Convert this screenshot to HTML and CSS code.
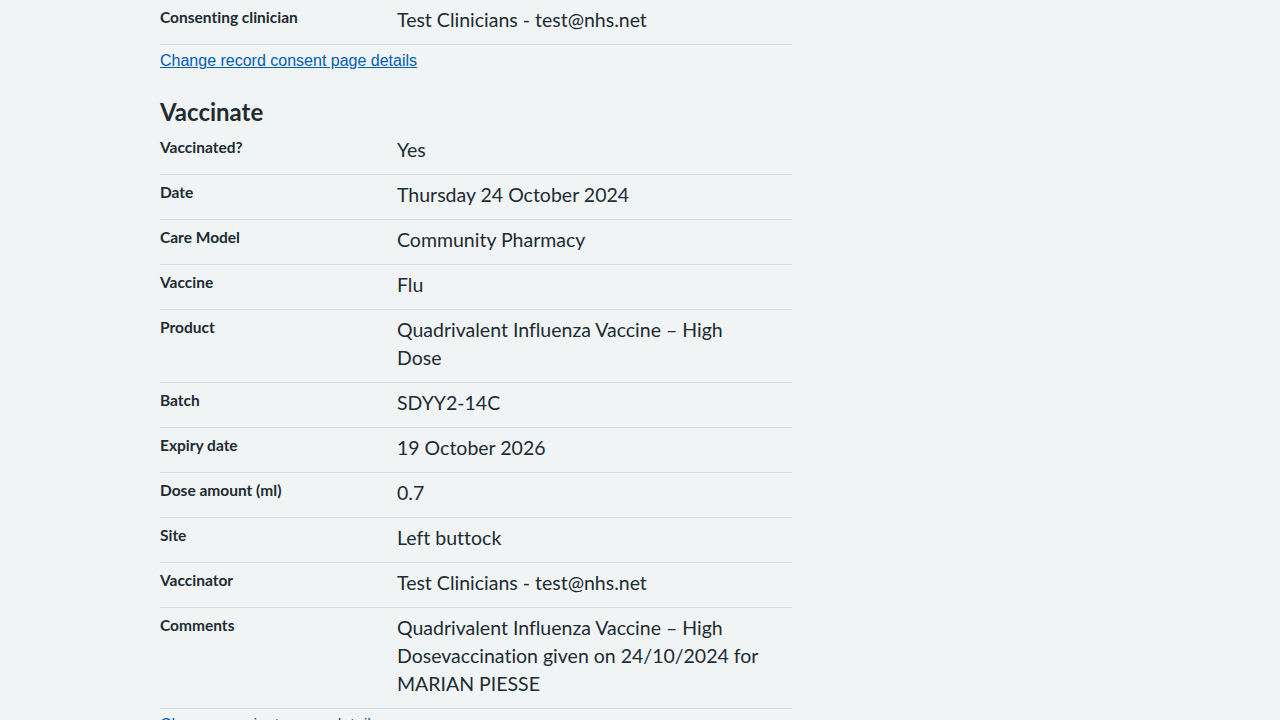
FILE: index.html
```html
<!DOCTYPE html>
<html lang="en">
<head>
<meta charset="utf-8">
<title>Check and confirm</title>
<link rel="stylesheet" href="styles.css">
</head>
<body>
<main class="page">
  <dl class="summary">
    <div class="row">
      <dt class="key">Consenting clinician</dt>
      <dd class="value">Test Clinicians - test@nhs.net</dd>
    </div>
  </dl>
  <p class="change"><a href="#">Change record consent page details</a></p>

  <h2 class="heading">Vaccinate</h2>
  <dl class="summary">
    <div class="row"><dt class="key">Vaccinated?</dt><dd class="value">Yes</dd></div>
    <div class="row"><dt class="key">Date</dt><dd class="value">Thursday 24 October 2024</dd></div>
    <div class="row"><dt class="key">Care Model</dt><dd class="value">Community Pharmacy</dd></div>
    <div class="row"><dt class="key">Vaccine</dt><dd class="value">Flu</dd></div>
    <div class="row"><dt class="key">Product</dt><dd class="value">Quadrivalent Influenza Vaccine – High Dose</dd></div>
    <div class="row"><dt class="key">Batch</dt><dd class="value">SDYY2-14C</dd></div>
    <div class="row"><dt class="key">Expiry date</dt><dd class="value">19 October 2026</dd></div>
    <div class="row"><dt class="key">Dose amount (ml)</dt><dd class="value">0.7</dd></div>
    <div class="row"><dt class="key">Site</dt><dd class="value">Left buttock</dd></div>
    <div class="row"><dt class="key">Vaccinator</dt><dd class="value">Test Clinicians - test@nhs.net</dd></div>
    <div class="row"><dt class="key">Comments</dt><dd class="value">Quadrivalent Influenza Vaccine – High Dosevaccination given on 24/10/2024 for MARIAN PIESSE</dd></div>
  </dl>
  <p class="change"><a href="#">Change vaccinate page details</a></p>
</main>
</body>
</html>
```

FILE: styles.css
```css
html, body {
  margin: 0;
  padding: 0;
  background: #f0f4f5;
  color: #212b32;
  font-family: Lato, "Noto Sans", sans-serif;
  font-variant-ligatures: none;
}

.page {
  width: 632px;
  margin: 0 0 0 160px;
}

.summary {
  margin: 0;
  padding: 0;
}

.row {
  display: grid;
  grid-template-columns: 237px 372px;
  border-bottom: 1px solid #d8dde0;
  padding: 6px 0 10px;
}

.key {
  margin: 0;
  font-size: 15.5px;
  font-weight: 700;
  line-height: 22px;
}

.value {
  margin: 0;
  font-size: 19.5px;
  line-height: 28px;
}

.change {
  margin: 0;
  padding: 6px 0 0;
  height: 40px;
  font-family: "Liberation Sans", Arial, sans-serif;
  font-size: 16px;
  line-height: 19px;
}

.change a {
  color: #005eb8;
  text-decoration: underline;
}

.heading {
  margin: 0;
  padding: 5px 0 0;
  font-size: 24px;
  font-weight: 700;
  line-height: 32px;
  height: 34px;
}
```
